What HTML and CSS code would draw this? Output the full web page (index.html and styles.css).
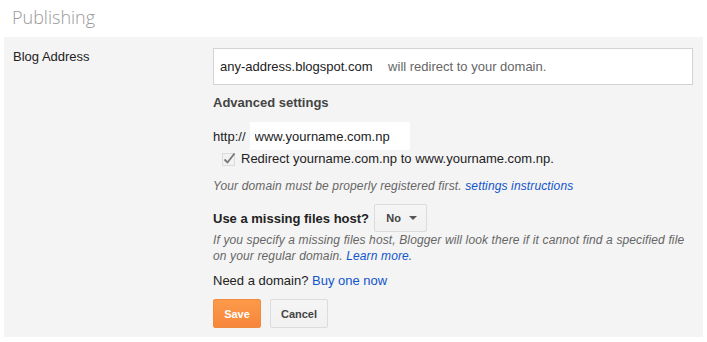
FILE: index.html
```html
<!DOCTYPE html>
<html lang="en">
<head>
  <meta charset="UTF-8">
  <title>Publishing</title>
  <link rel="stylesheet" href="styles.css">
</head>
<body>
  <!-- Title -->
  <div class="page-title">Publishing</div>

  <!-- Settings panel -->
  <div class="panel">
    <div class="row-label">Blog Address</div>
    <div class="row-content">
      <div class="address-box">
        <span class="address">any-address.blogspot.com</span>
        <span class="address-note">will redirect to your domain.</span>
      </div>

      <div class="section-title">Advanced settings</div>

      <div class="domain-row">
        <span class="prefix">http://</span>
        <input type="text" class="domain-input" value="www.yourname.com.np">
      </div>

      <label class="check-row">
        <svg class="check-icon" width="14" height="14" viewBox="0 0 14 14">
          <rect x="0.5" y="1.5" width="12" height="12" fill="#f2f2f2" stroke="#dcdcdc"/>
          <path d="M2.5 7.5 L5.5 10.5 L12.5 1.5" fill="none" stroke="#777" stroke-width="1.8"/>
        </svg>
        <span>Redirect yourname.com.np to www.yourname.com.np.</span>
      </label>

      <div class="hint hint-first">Your domain must be properly registered first. <a href="#" class="link">settings instructions</a></div>

      <div class="host-row">
        <span class="host-label">Use a missing files host?</span>
        <button class="select-button">No <span class="caret"></span></button>
      </div>

      <div class="hint">If you specify a missing files host, Blogger will look there if it cannot find a specified file<br>on your regular domain. <a href="#" class="link">Learn more.</a></div>

      <div class="need-domain">Need a domain? <a href="#" class="link">Buy one now</a></div>

      <div class="actions">
        <button class="save-button">Save</button>
        <button class="cancel-button">Cancel</button>
      </div>
    </div>
  </div>
</body>
</html>
```

FILE: styles.css
```css
body, html {
  margin: 0;
  padding: 0;
  background: white;
  font-family: "Liberation Sans", Arial, sans-serif;
  font-size: 13px;
  color: #222;
}

.page-title {
  font-family: "Open Sans", sans-serif;
  font-weight: 300;
  font-size: 18px;
  color: #999;
  height: 37px;
  line-height: 34px;
  padding-left: 12px;
}

.panel {
  margin: 0 4px;
  height: 300px;
  box-sizing: border-box;
  background: #f4f4f4;
  display: grid;
  grid-template-columns: 200px 1fr;
  padding: 11px 10px 0 9px;
}

.row-label {
  line-height: 16px;
  padding-top: 1px;
}

.row-content {
  display: flex;
  flex-direction: column;
  align-items: flex-start;
}

.address-box {
  align-self: stretch;
  height: 37px;
  box-sizing: border-box;
  background: white;
  border: 1px solid #d3d3d3;
  line-height: 35px;
  padding: 0 6px;
  color: #222;
}

.address-note {
  color: #666;
  margin-left: 12px;
}

.section-title {
  margin-top: 10px;
  line-height: 16px;
  font-weight: bold;
  color: #444;
}

.domain-row {
  margin-top: 11px;
  display: flex;
  align-items: center;
  gap: 4px;
}

.prefix {
  color: #222;
}

.domain-input {
  width: 160px;
  height: 28px;
  box-sizing: border-box;
  border: none;
  background: white;
  font-family: "Liberation Sans", Arial, sans-serif;
  font-size: 13px;
  color: #222;
  padding: 0 5px;
  outline: none;
}

.check-row {
  margin-top: 1px;
  display: flex;
  align-items: center;
  gap: 5px;
  padding-left: 9px;
  line-height: 16px;
}

.hint {
  font-size: 12px;
  font-style: italic;
  color: #666;
  line-height: 16px;
  letter-spacing: 0.13px;
}

.hint-first {
  margin-top: 11px;
}

.link {
  color: #15c;
  text-decoration: none;
}

.host-row {
  margin-top: 10px;
  display: flex;
  align-items: center;
  gap: 5px;
}

.host-label {
  font-weight: bold;
  font-size: 13px;
  color: #222;
}

.select-button {
  height: 28px;
  width: 53px;
  box-sizing: border-box;
  border: 1px solid #dcdcdc;
  border-radius: 2px;
  background: linear-gradient(#f5f5f5, #f1f1f1);
  font-family: "Liberation Sans", Arial, sans-serif;
  font-weight: bold;
  font-size: 11px;
  color: #444;
  display: flex;
  align-items: center;
  justify-content: center;
  gap: 8px;
  padding: 0 6px 0 8px;
}

.caret {
  width: 0;
  height: 0;
  border-left: 4px solid transparent;
  border-right: 4px solid transparent;
  border-top: 4px solid #555;
}

.need-domain {
  margin-top: 9px;
  line-height: 16px;
}

.actions {
  margin-top: 10px;
  display: flex;
  gap: 9px;
}

.save-button, .cancel-button {
  height: 29px;
  box-sizing: border-box;
  border-radius: 2px;
  font-family: "Liberation Sans", Arial, sans-serif;
  font-weight: bold;
  font-size: 11px;
  cursor: pointer;
}

.save-button {
  width: 48px;
  border: 1px solid #f08a3c;
  background: linear-gradient(#fd9a4a, #f6863b);
  color: white;
}

.cancel-button {
  width: 58px;
  border: 1px solid #dcdcdc;
  background: linear-gradient(#f5f5f5, #f1f1f1);
  color: #444;
}
```
